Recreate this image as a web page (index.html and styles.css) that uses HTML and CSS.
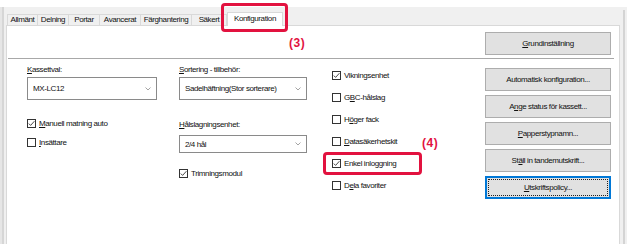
FILE: index.html
```html
<!doctype html>
<html>
    <head>
        <meta charset="utf-8">
        <title>Konfiguration</title>
        <link rel="stylesheet" href="styles.css">
    </head>
    <body>
        <div class="window">
            <div class="main">
                <div class="tabs">
                    <div class="tab t1">Allmänt</div>
                    <div class="tab t2">Delning</div>
                    <div class="tab t3">Portar</div>
                    <div class="tab t4">Avancerat</div>
                    <div class="tab t5">Färghantering</div>
                    <div class="tab t6">Säkert</div>
                    <div class="tab active">Konfiguration</div>
                </div>
                <div class="panel">
                    <div class="head">
                        <button type="button" class="btn"><u>G</u>rundinställning</button>
                    </div>
                    <div class="sep"></div>
                    <div class="cols">
                        <div class="col col1">
                            <div class="label"><u>K</u>assettval:</div>
                            <div class="select">MX-LC12<svg class="chev" width="6" height="4" viewBox="0 0 6 4"><polyline points="0.5,0.5 3,3 5.5,0.5"/></svg></div>
                            <div class="check first"><span class="box on"><svg width="7" height="7" viewBox="0 0 7 7"><polyline points="0.8,3.6 2.6,5.4 6.4,1.2"/></svg></span><u>M</u>anuell matning auto</div>
                            <div class="check"><span class="box"></span><u>I</u>nsättare</div>
                        </div>
                        <div class="col col2">
                            <div class="label"><u>S</u>ortering - tillbehör:</div>
                            <div class="select">Sadelhäftning(Stor sorterare)<svg class="chev" width="6" height="4" viewBox="0 0 6 4"><polyline points="0.5,0.5 3,3 5.5,0.5"/></svg></div>
                            <div class="label second"><u>H</u>ålslagningsenhet:</div>
                            <div class="select short">2/4 hål<svg class="chev" width="6" height="4" viewBox="0 0 6 4"><polyline points="0.5,0.5 3,3 5.5,0.5"/></svg></div>
                            <div class="check trim"><span class="box on"><svg width="7" height="7" viewBox="0 0 7 7"><polyline points="0.8,3.6 2.6,5.4 6.4,1.2"/></svg></span>Trimningsmodul</div>
                        </div>
                        <div class="col col3">
                            <div class="check"><span class="box on"><svg width="7" height="7" viewBox="0 0 7 7"><polyline points="0.8,3.6 2.6,5.4 6.4,1.2"/></svg></span>Vikningsenhet</div>
                            <div class="check"><span class="box"></span>G<u>B</u>C-hålslag</div>
                            <div class="check"><span class="box"></span>H<u>ö</u>ger fack</div>
                            <div class="check"><span class="box"></span><u>D</u>atasäkerhetskit</div>
                            <div class="check"><span class="box on"><svg width="7" height="7" viewBox="0 0 7 7"><polyline points="0.8,3.6 2.6,5.4 6.4,1.2"/></svg></span>Enkel inloggning</div>
                            <div class="check"><span class="box"></span>D<u>e</u>la favoriter</div>
                        </div>
                        <div class="col col4">
                            <button type="button" class="btn">Automatisk konfiguration...</button>
                            <button type="button" class="btn">A<u>n</u>ge status för kassett...</button>
                            <button type="button" class="btn"><u>P</u>apperstypnamn...</button>
                            <button type="button" class="btn">St<u>ä</u>ll in tandemutskrift...</button>
                            <button type="button" class="btn focus"><u>U</u>tskriftspolicy...</button>
                        </div>
                    </div>
                </div>
            </div>
            <div class="rightedge"></div>
        </div>
        <div class="mark box3"></div>
        <div class="num num3">(3)</div>
        <div class="mark box4"></div>
        <div class="num num4">(4)</div>
    </body>
</html>
```

FILE: styles.css
```css
body {
    margin: 0;
    background: #fff;
    font-family: "Liberation Sans", Arial, sans-serif;
    font-size: 8px;
    letter-spacing: -0.4px;
    color: #111;
    position: relative;
    width: 627px;
    height: 244px;
    overflow: hidden;
    white-space: nowrap;
}
.window {
    margin-top: 7px;
    height: 237px;
    background: #f0f0f0;
    display: flex;
    box-shadow: inset 2px 0 0 #e6e6e6, inset 4px 0 0 #d6d6d6;
    padding-left: 6px;
}
.main {
    width: 614px;
    display: flex;
    flex-direction: column;
}
.rightedge {
    width: 2px;
    margin-left: 3px;
    margin-top: 3px;
    background: #d4d4d4;
}
.tabs {
    height: 18px;
    display: flex;
    align-items: flex-end;
    padding-left: 1px;
}
.tab {
    box-sizing: border-box;
    height: 11px;
    line-height: 10px;
    border: 1px solid #d9d9d9;
    border-bottom: none;
    margin-right: -1px;
    text-align: center;
    background: #f0f0f0;
}
.t1 { width: 31px; }
.t2 { width: 32px; }
.t3 { width: 32px; }
.t4 { width: 42px; }
.t5 { width: 52px; }
.t6 { width: 36px; }
.tab.active {
    width: 56px;
    height: 14px;
    line-height: 12px;
    margin-left: 1px;
    margin-bottom: -1px;
    background: #fff;
    position: relative;
    z-index: 1;
}
.panel {
    flex: 1;
    background: #fff;
    border: 1px solid #d9d9d9;
    border-bottom: none;
}
.head {
    height: 32px;
    box-sizing: border-box;
    padding: 6px 8px 0 0;
    display: flex;
    justify-content: flex-end;
}
.sep {
    height: 1px;
    background: #a8a8a8;
    margin: 0 5px 0 1px;
}
.btn {
    box-sizing: border-box;
    width: 126px;
    height: 23px;
    padding: 0;
    background: #e1e1e1;
    border: 1px solid #adadad;
    font-family: inherit;
    font-size: 8px;
    letter-spacing: -0.4px;
    color: #111;
}
.btn.focus {
    border: 2px solid #0078d7;
    outline: 1px dotted #222;
    outline-offset: -4px;
}
.cols {
    display: flex;
    padding: 6px 8px 0 20px;
}
.col {
    display: flex;
    flex-direction: column;
}
.col1 { width: 130px; }
.col2 { width: 128px; margin-left: 22px; }
.col3 { width: 140px; margin-left: 25px; gap: 8px; padding-top: 3px; }
.col4 { margin-left: auto; gap: 4px; padding-top: 3px; }
.label {
    height: 10px;
    line-height: 10px;
    margin-bottom: 2px;
}
.label.second {
    margin-top: 20px;
    margin-bottom: 5px;
}
.select {
    box-sizing: border-box;
    height: 23px;
    border: 1px solid #8a8a8a;
    display: flex;
    align-items: center;
    justify-content: space-between;
    padding: 0 5px 0 5px;
}
.select.short {
    height: 18px;
}
.chev polyline {
    fill: none;
    stroke: #9a9a9a;
    stroke-width: 0.9;
}
.check {
    height: 14px;
    display: flex;
    align-items: center;
}
.check.first { margin-top: 16px; margin-bottom: 5px; }
.check.trim { margin-top: 13px; }
.box {
    box-sizing: border-box;
    width: 9px;
    height: 9px;
    border: 1px solid #333;
    background: #fff;
    margin-right: 3px;
    display: flex;
    align-items: center;
    justify-content: center;
}
.box svg polyline {
    fill: none;
    stroke: #333;
    stroke-width: 0.9;
}
.mark {
    position: absolute;
    box-sizing: border-box;
    border: 3px solid #e2123f;
    border-radius: 4px;
    z-index: 2;
}
.box3 { left: 221px; top: 3px; width: 67px; height: 29px; }
.box4 { left: 323px; top: 152px; width: 99px; height: 23px; }
.num {
    position: absolute;
    font-family: "Liberation Sans", sans-serif;
    font-weight: bold;
    font-size: 12px;
    line-height: 12px;
    letter-spacing: 0.5px;
    color: #e2123f;
}
.num3 { left: 289px; top: 37px; }
.num4 { left: 422px; top: 137px; }
```
